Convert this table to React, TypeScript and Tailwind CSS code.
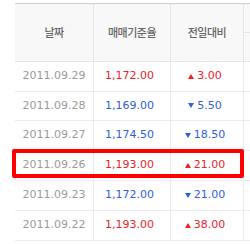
import React from "react";

type Row = { date: string; price: string; diff: string; up: boolean; hl?: boolean };

const rows: Row[] = [
  { date: "2011.09.29", price: "1,172.00", diff: "3.00", up: true },
  { date: "2011.09.28", price: "1,169.00", diff: "5.50", up: false },
  { date: "2011.09.27", price: "1,174.50", diff: "18.50", up: false },
  { date: "2011.09.26", price: "1,193.00", diff: "21.00", up: true, hl: true },
  { date: "2011.09.23", price: "1,172.00", diff: "21.00", up: false },
  { date: "2011.09.22", price: "1,193.00", diff: "38.00", up: true },
];

const heights = ["h-[30px]", "h-[29px]", "h-[30px]", "h-[30px]", "h-[30px]", "h-[30px]"];

function Tri({ up }: { up: boolean }) {
  return (
    <svg width="6" height="5" viewBox="0 0 6 5" className="mr-[3px] mb-[1px]">
      {up ? (
        <polygon points="3,0 6,5 0,5" fill="#ff1a1a" />
      ) : (
        <polygon points="0,0 6,0 3,5" fill="#2e5fd8" />
      )}
    </svg>
  );
}

export default function App() {
  const num = { fontFamily: '"DejaVu Sans", Verdana, sans-serif' };
  const kr = { fontFamily: '"Noto Sans CJK KR", "Noto Sans", sans-serif' };
  return (
    <div className="relative w-[250px] h-[244px] overflow-hidden bg-white">
      <div className="pt-[3px] pl-[15px] w-[320px]">
        <div className="border-t border-[#cfcfcf]">
          <div className="flex h-[58px] bg-[#f8f8f8] border-b border-[#e6e6e6]" style={kr}>
            <div className="w-[79px] border-r border-[#e6e6e6] flex items-center justify-center text-[11px] tracking-[-0.5px] text-[#666] font-medium">
              날짜
            </div>
            <div className="w-[77px] border-r border-[#e6e6e6] flex items-center justify-center text-[11px] tracking-[-0.5px] text-[#666] font-medium">
              매매기준율
            </div>
            <div className="w-[73px] border-r border-[#e6e6e6] flex items-center justify-center text-[11px] tracking-[-0.5px] text-[#666] font-medium">
              전일대비
            </div>
            <div className="flex-1 flex flex-col">
              <div className="h-[29px] border-b border-[#e6e6e6]"></div>
              <div className="flex-1"></div>
            </div>
          </div>
          {rows.map((r, i) => {
            const color = r.up ? "text-[#e8232d]" : "text-[#2e5fd8]";
            return (
              <div
                key={i}
                className={`flex ${heights[i]} border-b border-[#ebebeb] text-[11px]`}
                style={num}
              >
                <div className="w-[79px] border-r border-[#ebebeb] flex items-center justify-center text-[#9a9a9a]">
                  {r.date}
                </div>
                <div className={`w-[77px] border-r border-[#ebebeb] flex items-center justify-center pr-[5px] ${color}`}>
                  {r.price}
                </div>
                <div className={`w-[73px] border-r border-[#ebebeb] flex items-center justify-center pr-[4px] ${color}`}>
                  <Tri up={r.up} />
                  {r.diff}
                </div>
                <div className="flex-1"></div>
              </div>
            );
          })}
        </div>
      </div>
      <div className="absolute left-[12px] top-[149px] w-[232px] h-[29px] border-4 border-[#ff0000] rounded-[2px]"></div>
    </div>
  );
}
